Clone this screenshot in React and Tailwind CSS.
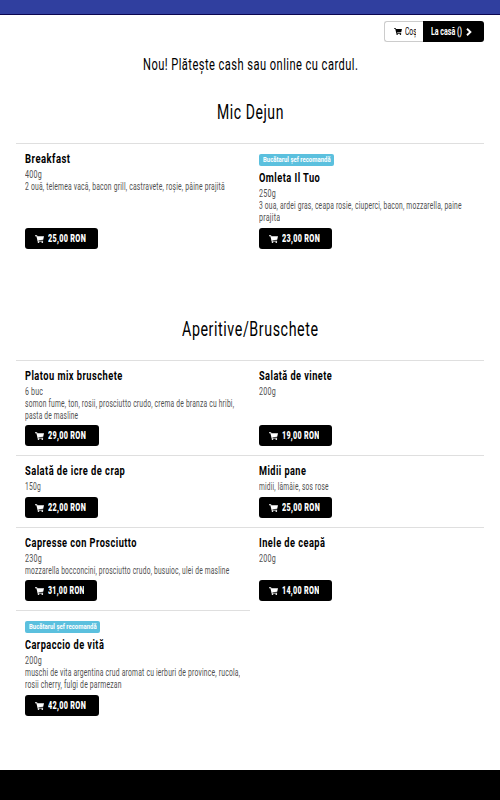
import { useLayoutEffect, useRef, useState } from "react";

// Condensed lettering: a single line of text squeezed to a given width.
function Narrow({ w, className = "", children }) {
  const ref = useRef(null);
  const [scale, setScale] = useState(1);
  useLayoutEffect(() => {
    const fit = () => {
      if (ref.current) setScale(w / ref.current.offsetWidth);
    };
    fit();
    document.fonts?.ready.then(fit);
  }, [w, children]);
  return (
    <span className={"block overflow-x-clip whitespace-nowrap " + className} style={{ width: w }}>
      <span ref={ref} className="inline-block origin-left align-top" style={{ transform: `scaleX(${scale})` }}>
        {children}
      </span>
    </span>
  );
}

function Cart({ className = "" }) {
  return (
    <svg viewBox="0 0 18 16" className={className} fill="currentColor">
      <path d="M0 .4h4.2l.6 1.9H18l-1.6 7.3-9.6.8.2.9h9.2v1.8H5.3L2.8 2.4H0z" />
      <circle cx="7" cy="14.2" r="1.7" />
      <circle cx="14.6" cy="14.2" r="1.7" />
    </svg>
  );
}

function Dish({ title, tw, lines, price, pw = 38, bw = 73, badge, className = "" }) {
  return (
    <div className={"flex flex-col items-start border-t border-[#dfdfdf] pt-[7px] pb-[9px] pl-[9px] " + className}>
      {badge && (
        <div className="mt-[3px] mb-1 flex h-3 w-[75px] items-center rounded-[2px] bg-[#5bc0de] pl-1">
          <Narrow w={68} className="text-[7.5px] leading-3 font-bold text-white">Bucătarul șef recomandă</Narrow>
        </div>
      )}
      <h3>
        <Narrow w={tw} className="text-[12.5px] leading-4 font-bold tracking-[0.05em] text-black">{title}</Narrow>
      </h3>
      <div className="mt-0.5">
        {lines.map(([text, w]) => (
          <Narrow key={text} w={w} className="text-[10.5px] leading-3 tracking-[0.03em] text-[#505050]">{text}</Narrow>
        ))}
      </div>
      <button className="mt-auto flex h-[21px] items-center rounded-[3px] bg-black pl-2.5 text-white" style={{ width: bw }}>
        <Cart className="mr-[3.5px] h-2 w-[9px]" />
        <Narrow w={pw} className="text-[10.5px] leading-[21px] font-black tracking-[0.04em]">{price} RON</Narrow>
      </button>
    </div>
  );
}

export default function App() {
  return (
    <div className="flex h-[800px] w-full max-w-[500px] flex-col overflow-hidden bg-white font-['Roboto','Liberation_Sans',sans-serif]">
      <header className="h-[15px] shrink-0 border-b border-[#0b0650] bg-[#303f9f]" />
      <div className="mt-1.5 flex justify-end pr-4">
        <button className="flex h-[21px] w-[39px] items-center rounded-l-[3px] border border-r-0 border-[#ccc] pl-[9px] text-black">
          <Cart className="mr-[2.5px] h-[7px] w-2" />
          <Narrow w={11.5} className="text-[10.5px] leading-5">Coș</Narrow>
        </button>
        <button className="flex h-[21px] w-[61px] items-center rounded-r-[3px] bg-black pl-2 text-white">
          <Narrow w={31} className="text-[10.5px] leading-5 font-bold">La casă ()</Narrow>
          <svg viewBox="0 0 6 8" className="ml-1 h-2 w-1.5" fill="none" stroke="currentColor" strokeWidth="1.9">
            <path d="M1 .7 4.4 4 1 7.3" />
          </svg>
        </button>
      </div>
      <p className="mt-3 flex justify-center">
        <Narrow w={215} className="text-[16.5px] leading-[22px] tracking-[0.04em] text-black">Nou! Plătește cash sau online cu cardul.</Narrow>
      </p>
      <h2 className="mt-[22px] flex h-[45px] justify-center">
        <Narrow w={67} className="text-[20.5px] leading-7 tracking-[0.04em] text-black">Mic Dejun</Narrow>
      </h2>
      <section className="mx-4 grid grid-cols-2 grid-rows-[115px]">
        <Dish title="Breakfast" tw={45.5} lines={[["400g", 17], ["2 ouă, telemea vacă, bacon grill, castravete, roșie, pâine prajită", 200]]} price="25,00" />
        <Dish badge title="Omleta Il Tuo" tw={61.5} lines={[["250g", 17], ["3 oua, ardei gras, ceapa rosie, ciuperci, bacon, mozzarella, paine", 202.5], ["prajita", 21]]} price="23,00" />
      </section>
      <h2 className="mt-[57px] flex h-[45px] justify-center">
        <Narrow w={136.5} className="text-[20.5px] leading-7 tracking-[0.04em] text-black">Aperitive/Bruschete</Narrow>
      </h2>
      <section className="mx-4 grid grid-cols-2 grid-rows-[95px_72px_83px_115px]">
        <Dish title="Platou mix bruschete" tw={98} lines={[["6 buc", 18], ["somon fume, ton, rosii, prosciutto crudo, crema de branza cu hribi,", 209.5], ["pasta de masline", 53.5]]} price="29,00" bw={73.5} />
        <Dish title="Salată de vinete" tw={73.5} lines={[["200g", 17]]} price="19,00" pw={37.5} bw={72.5} />
        <Dish title="Salată de icre de crap" tw={100.5} lines={[["150g", 16]]} price="22,00" />
        <Dish title="Midii pane" tw={47.5} lines={[["midii, lămâie, sos rose", 70]]} price="25,00" />
        <Dish title="Capresse con Prosciutto" tw={112} lines={[["230g", 17], ["mozzarella bocconcini, prosciutto crudo, busuioc, ulei de masline", 204.5]]} price="31,00" pw={36.7} bw={72} />
        <Dish title="Inele de ceapă" tw={66.5} lines={[["200g", 17]]} price="14,00" pw={37.5} bw={72.5} />
        <Dish badge title="Carpaccio de vită" tw={79.5} lines={[["200g", 17], ["muschi de vita argentina crud aromat cu ierburi de province, rucola,", 215], ["rosii cherry, fulgi de parmezan", 96.5]]} price="42,00" bw={73.5} />
      </section>
      <footer className="mt-auto h-[30px] shrink-0 bg-black" />
    </div>
  );
}
